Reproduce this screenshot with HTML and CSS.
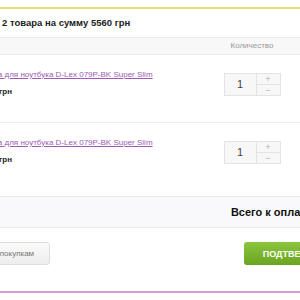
FILE: index.html
```html
<!DOCTYPE html>
<html lang="ru">
<head>
    <meta charset="UTF-8">
    <meta name="viewport" content="width=device-width, initial-scale=1.0">
    <title>Корзина</title>
    <link rel="stylesheet" href="styles.css">
</head>
<body>
    <div class="top-line"></div>

    <div class="cart">
        <h2 class="cart-title">2 товара на сумму 5560 грн</h2>

        <div class="cart-head">
            <div></div>
            <div class="col-qty">Количество</div>
            <div class="col-price">Цена</div>
        </div>

        <!-- товары -->
        <div class="item">
            <div class="info">
                <a href="#" class="name">Сумка для ноутбука D-Lex 079P-BK Super Slim</a>
                <div class="price">2780 грн</div>
            </div>
            <div class="col-qty">
                <div class="qty">
                    <div class="qty-val">1</div>
                    <div class="qty-btns">
                        <span>+</span>
                        <span>&minus;</span>
                    </div>
                </div>
            </div>
            <div></div>
        </div>

        <div class="item last">
            <div class="info">
                <a href="#" class="name">Сумка для ноутбука D-Lex 079P-BK Super Slim</a>
                <div class="price">2780 грн</div>
            </div>
            <div class="col-qty">
                <div class="qty">
                    <div class="qty-val">1</div>
                    <div class="qty-btns">
                        <span>+</span>
                        <span>&minus;</span>
                    </div>
                </div>
            </div>
            <div></div>
        </div>

        <div class="total">
            <span class="total-label">Всего к оплате:</span>
            <span class="total-sum">5560 грн</span>
        </div>

        <div class="actions">
            <button class="btn-back">Вернуться к покупкам</button>
            <button class="btn-confirm">ПОДТВЕРДИТЬ ЗАКАЗ</button>
        </div>
    </div>

    <div class="bottom-line"></div>
</body>
</html>
```

FILE: styles.css
```css
* {
    margin: 0;
    padding: 0;
    box-sizing: border-box;
    font-family: 'Liberation Sans', Arial, sans-serif;
}
html, body {
    width: 300px;
    overflow: hidden;
}
body {
    background: #fff;
    color: #222;
    padding-top: 7px;
}
.top-line {
    height: 2px;
    background: #f3d77a;
}
.cart {
    width: 390px;
}
.cart-title {
    font-size: 9.5px;
    font-weight: bold;
    line-height: 28px;
    padding-left: 2px;
    color: #222;
}
.cart-head,
.item {
    display: grid;
    grid-template-columns: 217px 70px 1fr;
}
.cart-head {
    height: 18px;
    line-height: 16px;
    background: #f8f8f8;
    border-top: 1px solid #e9e9e9;
    border-bottom: 1px solid #e9e9e9;
    font-size: 8px;
    color: #999;
}
.col-qty {
    display: flex;
    justify-content: center;
}
.col-price {
    padding-left: 24px;
}
.item {
    height: 68px;
    border-bottom: 1px solid #eee;
}
.item.last {
    border-bottom: none;
}
.info {
    margin-left: -21px;
    padding-top: 14px;
}
.name {
    display: block;
    font-size: 8px;
    line-height: 12px;
    color: #9a5bb0;
}
.price {
    margin-top: 6px;
    font-size: 8px;
    font-weight: bold;
    color: #222;
}
.item .col-qty {
    padding-top: 18px;
    align-items: flex-start;
}
.qty {
    display: flex;
    width: 57px;
    height: 23px;
    border: 1px solid #e3e3e3;
    background: #f7f7f7;
}
.qty-val {
    width: 32px;
    border-right: 1px solid #e3e3e3;
    text-align: center;
    line-height: 21px;
    font-size: 11px;
    color: #444;
}
.qty-btns {
    flex: 1;
    display: flex;
    flex-direction: column;
}
.qty-btns span {
    flex: 1;
    text-align: center;
    font-size: 9px;
    line-height: 10px;
    color: #b0b0b0;
}
.qty-btns span + span {
    border-top: 1px solid #e3e3e3;
}
.total {
    margin-top: 5px;
    height: 32px;
    display: flex;
    justify-content: flex-end;
    align-items: center;
    gap: 8px;
    padding-right: 21px;
    background: #f9f9fb;
    border-top: 1px solid #e8e8e8;
    border-bottom: 1px solid #ececec;
    font-size: 11px;
    font-weight: bold;
    color: #111;
}
.actions {
    display: flex;
    justify-content: space-between;
    margin-top: 14px;
    padding-right: 8px;
}
.btn-back {
    margin-left: -63px;
    height: 23px;
    padding: 0 15px;
    background: linear-gradient(#fbfbfb, #ededed);
    border: 1px solid #dedede;
    border-radius: 3px;
    font-size: 8px;
    color: #777;
}
.btn-confirm {
    height: 23px;
    padding: 0 19px;
    background: linear-gradient(#8cc63f, #6aa420);
    border: none;
    border-radius: 3px;
    font-size: 9px;
    font-weight: bold;
    color: #fff;
}
.bottom-line {
    margin-top: 26px;
    height: 2px;
    background: #d49bd4;
}
```
